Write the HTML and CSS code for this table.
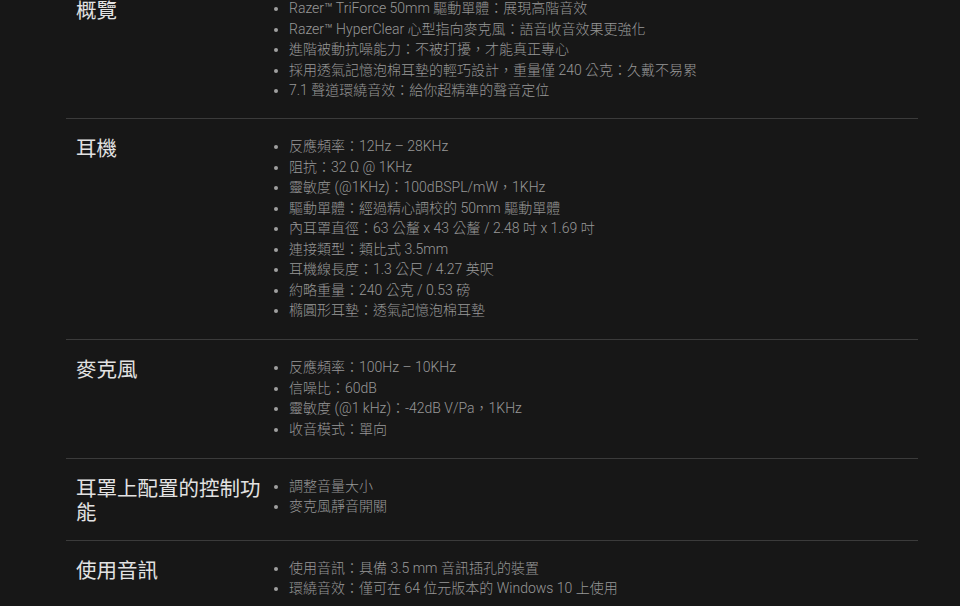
FILE: index.html
```html
<!DOCTYPE html>
<html lang="zh-Hant">
<head>
<meta charset="utf-8">
<title>規格</title>
<link rel="stylesheet" href="styles.css">
</head>
<body>
<div class="specs">
  <section class="spec first">
    <h3 class="spec-title">概覽</h3>
    <ul class="spec-list">
      <li>Razer™ TriForce 50mm 驅動單體：展現高階音效</li>
      <li>Razer™ HyperClear 心型指向麥克風：語音收音效果更強化</li>
      <li>進階被動抗噪能力：不被打擾，才能真正專心</li>
      <li>採用透氣記憶泡棉耳墊的輕巧設計，重量僅 240 公克：久戴不易累</li>
      <li>7.1 聲道環繞音效：給你超精準的聲音定位</li>
    </ul>
  </section>
  <section class="spec">
    <h3 class="spec-title">耳機</h3>
    <ul class="spec-list">
      <li>反應頻率：12Hz – 28KHz</li>
      <li>阻抗：32 Ω @ 1KHz</li>
      <li>靈敏度 (@1KHz)：100dBSPL/mW，1KHz</li>
      <li>驅動單體：經過精心調校的 50mm 驅動單體</li>
      <li>內耳罩直徑：63 公釐 x 43 公釐 / 2.48 吋 x 1.69 吋</li>
      <li>連接類型：類比式 3.5mm</li>
      <li>耳機線長度：1.3 公尺 / 4.27 英呎</li>
      <li>約略重量：240 公克 / 0.53 磅</li>
      <li>橢圓形耳墊：透氣記憶泡棉耳墊</li>
    </ul>
  </section>
  <section class="spec">
    <h3 class="spec-title">麥克風</h3>
    <ul class="spec-list">
      <li>反應頻率：100Hz – 10KHz</li>
      <li>信噪比：60dB</li>
      <li>靈敏度 (@1 kHz)：-42dB V/Pa，1KHz</li>
      <li>收音模式：單向</li>
    </ul>
  </section>
  <section class="spec">
    <h3 class="spec-title">耳罩上配置的控制功能</h3>
    <ul class="spec-list">
      <li>調整音量大小</li>
      <li>麥克風靜音開關</li>
    </ul>
  </section>
  <section class="spec">
    <h3 class="spec-title">使用音訊</h3>
    <ul class="spec-list">
      <li>使用音訊：具備 3.5 mm 音訊插孔的裝置</li>
      <li>環繞音效：僅可在 64 位元版本的 Windows 10 上使用</li>
    </ul>
  </section>
</div>
</body>
</html>
```
FILE: styles.css
```css
html, body {
  margin: 0;
  padding: 0;
  background: #171717;
  height: 100%;
  overflow: hidden;
}

body {
  font-family: Roboto, "Noto Sans CJK TC", "Noto Sans", sans-serif;
}

.specs {
  margin: -19px 42px 0 66px;
}

.spec {
  display: grid;
  grid-template-columns: 195px 1fr;
  padding: 16px 0 17px 10px;
  border-top: 1px solid #3b3b3b;
}

.spec.first {
  border-top: none;
  padding-bottom: 16px;
}

.spec-title {
  margin: 0;
  font-size: 20.5px;
  line-height: 24px;
  font-weight: 400;
  color: #e2e2e2;
  font-family: "Noto Sans CJK TC", Roboto, sans-serif;
}

.spec-list {
  margin: 1px 0 1.5px;
  padding: 0 0 0 18px;
  list-style: disc;
  color: #989898;
  font-size: 14px;
  font-weight: 300;
  line-height: 20.5px;
}

.spec-list li::marker {
  color: #a0a0a0;
}
```
